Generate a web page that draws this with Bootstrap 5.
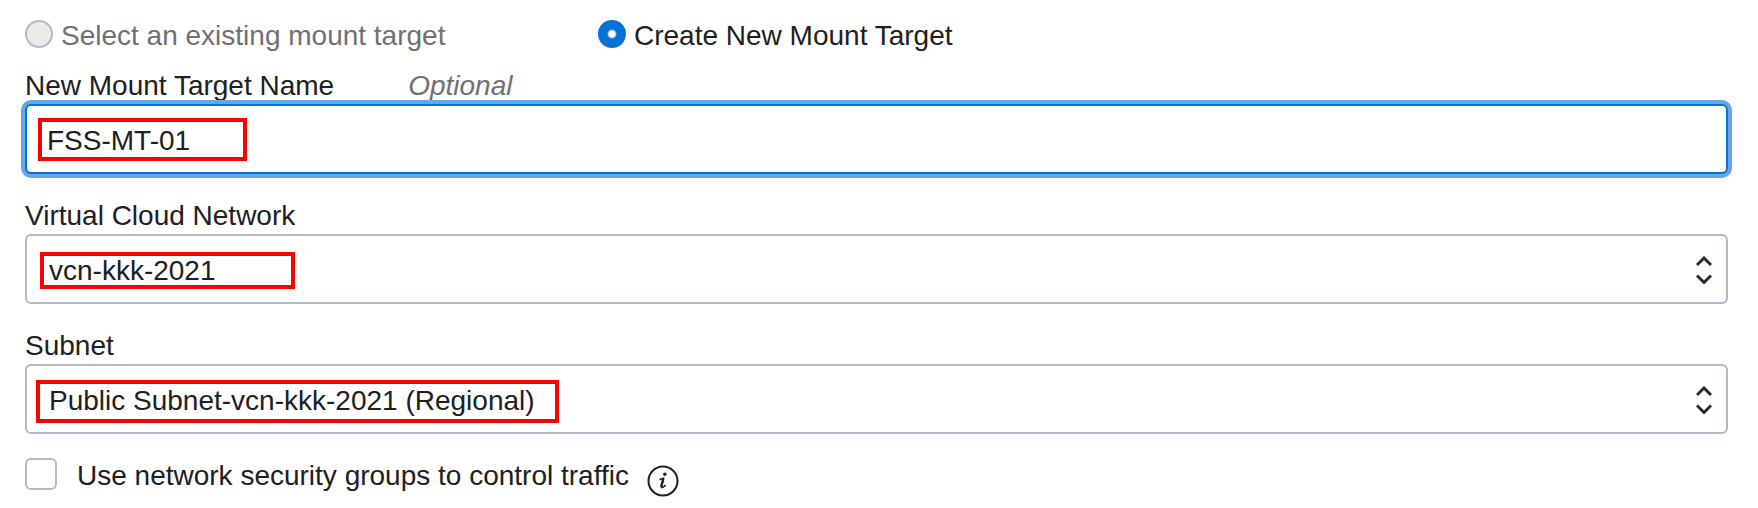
<!DOCTYPE html>
<html lang="en">
<head>
<meta charset="utf-8">
<meta name="viewport" content="width=device-width, initial-scale=1">
<title>Mount Target</title>
<link href="https://cdn.jsdelivr.net/npm/bootstrap@5.3.0/dist/css/bootstrap.min.css" rel="stylesheet">
<style>
body { font-family: "Liberation Sans", Arial, sans-serif; font-size: 28px; line-height: 32px; color: #202020; background: #fff; }
.mount-form { padding: 18px 30px 16px 25px; }
.choices { margin-bottom: 18px; }
.choice-old { flex: 0 0 573px; }
.choice-dot { appearance: none; flex: none; width: 28px; height: 28px; margin: 2px 0 0; border: 2px solid #b3b9c3; border-radius: 50%; background: #ebebeb; }
.choice-dot:checked { border: 0; background: radial-gradient(circle, #fff 3px, #0572d6 5px); }
.choice-dot:disabled + label, .hint { color: #707070; }
.choice { column-gap: 8px; }
.field-head { column-gap: 74px; margin-bottom: 2px; }
.field { margin-bottom: 26px; }
.field:last-of-type { margin-bottom: 24px; }
.field .form-control, .field .form-select { height: 70px; padding: 3px 22px 0; font-size: 28px; line-height: 32px; color: #202020; border: 2px solid #b3b9c3; border-radius: 6px; background-image: none; background-color: #fff; }
.field .form-control { padding: 3px 20px 0; border-color: #0572d6; box-shadow: 0 0 0 4px #68a6e6; }
.arrows { top: 22px; right: 16px; width: 16px; height: 28px; pointer-events: none; }
.marker { border: 4px solid #f00; pointer-events: none; }
.marker-name { left: 13px; top: 14px; width: 209px; height: 43px; }
.marker-vcn { left: 15px; top: 18px; width: 255px; height: 37px; }
.marker-subnet { left: 11px; top: 16px; width: 523px; height: 43px; }
.tick { appearance: none; flex: none; width: 32px; height: 32px; margin: 0 20px 0 0; border: 2px solid #b3b9c3; border-radius: 6px; background: #fff; }
.tick + label, .choice-dot + label { padding-top: 2px; }
.info { width: 32px; height: 32px; margin: 7px 0 0 18px; color: #202020; }
</style>
</head>
<body>
<form class="mount-form">
  <div class="choices d-flex flex-wrap">
    <div class="choice choice-old d-flex align-items-start">
      <input class="choice-dot" type="radio" name="target" id="existing" disabled>
      <label for="existing">Select an existing mount target</label>
    </div>
    <div class="choice d-flex align-items-start">
      <input class="choice-dot" type="radio" name="target" id="create" checked>
      <label for="create">Create New Mount Target</label>
    </div>
  </div>

  <div class="field">
    <div class="field-head d-flex">
      <label for="name">New Mount Target Name</label>
      <em class="hint">Optional</em>
    </div>
    <div class="position-relative">
      <input class="form-control" type="text" id="name" value="FSS-MT-01">
      <span class="marker marker-name position-absolute"></span>
    </div>
  </div>

  <div class="field">
    <div class="field-head d-flex"><label for="vcn">Virtual Cloud Network</label></div>
    <div class="position-relative">
      <select class="form-select" id="vcn"><option>vcn-kkk-2021</option></select>
      <svg class="arrows position-absolute" viewBox="0 0 16 28" fill="none" stroke="#2b2b2b" stroke-width="3" aria-hidden="true"><path d="M1 9 8 2 15 9M1 19.5 8 26.5 15 19.5"/></svg>
      <span class="marker marker-vcn position-absolute"></span>
    </div>
  </div>

  <div class="field">
    <div class="field-head d-flex"><label for="subnet">Subnet</label></div>
    <div class="position-relative">
      <select class="form-select" id="subnet"><option>Public Subnet-vcn-kkk-2021 (Regional)</option></select>
      <svg class="arrows position-absolute" viewBox="0 0 16 28" fill="none" stroke="#2b2b2b" stroke-width="3" aria-hidden="true"><path d="M1 9 8 2 15 9M1 19.5 8 26.5 15 19.5"/></svg>
      <span class="marker marker-subnet position-absolute"></span>
    </div>
  </div>

  <section class="d-flex align-items-start">
    <input class="tick" type="checkbox" id="nsg">
    <label for="nsg">Use network security groups to control traffic</label>
    <button class="info btn border-0 p-0 d-flex" type="button" aria-label="More information">
      <svg viewBox="0 0 32 32" width="32" height="32" aria-hidden="true"><circle cx="16" cy="16" r="14.5" fill="none" stroke="currentColor" stroke-width="2"/><circle cx="17.8" cy="9.2" r="1.7" fill="currentColor"/><path d="M12.5 14.6Q14.8 13.4 16.6 13.2L14.4 21.3Q14.2 22.9 15.4 22.5Q17 22 18.6 20" fill="none" stroke="currentColor" stroke-width="1.5"/><path d="M16.3 13.6 14.2 21.8" stroke="currentColor" stroke-width="2.4"/></svg>
    </button>
  </section>
</form>
<script src="https://cdn.jsdelivr.net/npm/bootstrap@5.3.0/dist/js/bootstrap.bundle.min.js"></script>
</body>
</html>
